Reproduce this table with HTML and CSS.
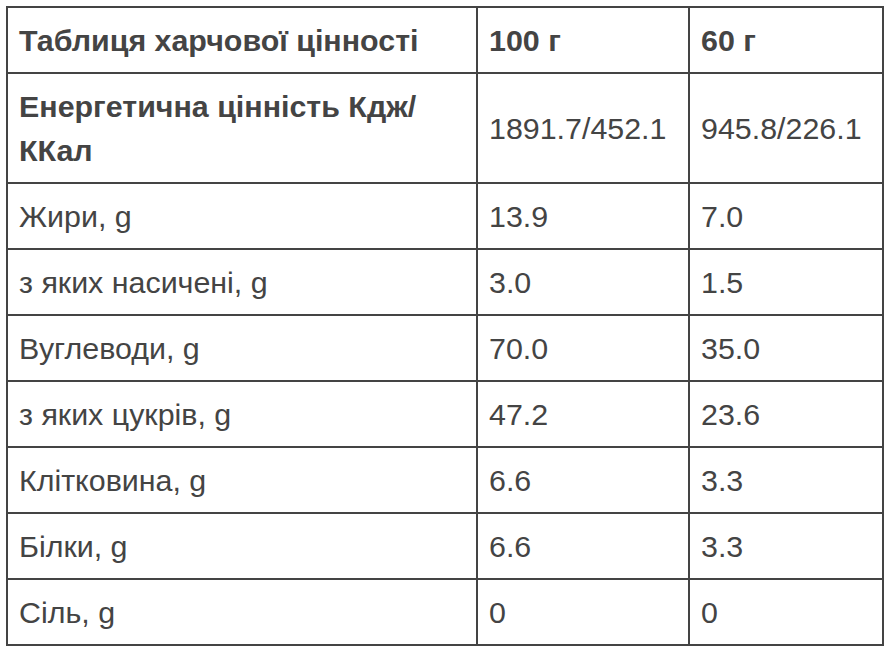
FILE: index.html
```html
<!DOCTYPE html>
<html lang="uk">
<head>
<meta charset="utf-8">
<link rel="stylesheet" href="styles.css">
</head>
<body>
<table class="nutri">
  <colgroup>
    <col class="c1">
    <col class="c2">
    <col class="c3">
  </colgroup>
  <thead>
    <tr><th>Таблиця харчової цінності</th><th>100 г</th><th>60 г</th></tr>
  </thead>
  <tbody>
    <tr><th>Енергетична цінність Кдж/ККал</th><td>1891.7/452.1</td><td>945.8/226.1</td></tr>
    <tr><td>Жири, g</td><td>13.9</td><td>7.0</td></tr>
    <tr><td>з яких насичені, g</td><td>3.0</td><td>1.5</td></tr>
    <tr><td>Вуглеводи, g</td><td>70.0</td><td>35.0</td></tr>
    <tr><td>з яких цукрів, g</td><td>47.2</td><td>23.6</td></tr>
    <tr><td>Клітковина, g</td><td>6.6</td><td>3.3</td></tr>
    <tr><td>Білки, g</td><td>6.6</td><td>3.3</td></tr>
    <tr><td>Сіль, g</td><td>0</td><td>0</td></tr>
  </tbody>
</table>
</body>
</html>
```

FILE: styles.css
```css
html, body {
  margin: 0;
  background: #fff;
}
body {
  padding: 6px 0 0 6px;
}
.nutri {
  border-collapse: collapse;
  table-layout: fixed;
  width: 878px;
  font-family: "Liberation Sans", Arial, sans-serif;
  font-size: 30.4px;
  line-height: 44px;
  color: #444;
}
.c1 { width: 470px; }
.c2 { width: 212px; }
.c3 { width: 194px; }
.nutri th,
.nutri td {
  border: 2px solid #444;
  padding: 10px 11px;
  text-align: left;
  vertical-align: middle;
}
.nutri th {
  font-weight: bold;
}
.nutri td {
  font-weight: normal;
}
```
